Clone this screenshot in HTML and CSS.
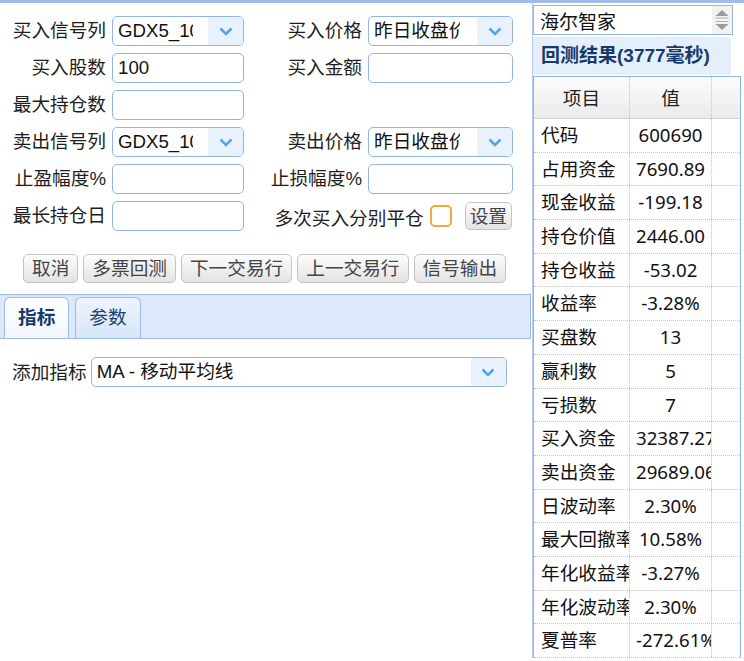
FILE: index.html
```html
<!DOCTYPE html>
<html>
<head>
    <title>回测</title>
    <meta charset="UTF-8">
    <link rel="stylesheet" href="styles.css">
</head>
<body>
    <div class="page">
        <div class="left">
            <div class="form">
                <div class="label">买入信号列</div>
                <div class="select"><div class="value">GDX5_10日金叉</div><div class="arrow"><svg width="14" height="9" viewBox="0 0 14 9"><polyline points="1.5,1.5 7,7 12.5,1.5" fill="none" stroke="#5aa2e6" stroke-width="2.6"/></svg></div></div>
                <div class="label">买入价格</div>
                <div class="select"><div class="value wide">昨日收盘价</div><div class="arrow"><svg width="14" height="9" viewBox="0 0 14 9"><polyline points="1.5,1.5 7,7 12.5,1.5" fill="none" stroke="#5aa2e6" stroke-width="2.6"/></svg></div></div>

                <div class="label">买入股数</div>
                <div class="input">100</div>
                <div class="label">买入金额</div>
                <div class="input"></div>

                <div class="label">最大持仓数</div>
                <div class="input"></div>
                <div></div>
                <div></div>

                <div class="label">卖出信号列</div>
                <div class="select"><div class="value">GDX5_10日死叉</div><div class="arrow"><svg width="14" height="9" viewBox="0 0 14 9"><polyline points="1.5,1.5 7,7 12.5,1.5" fill="none" stroke="#5aa2e6" stroke-width="2.6"/></svg></div></div>
                <div class="label">卖出价格</div>
                <div class="select"><div class="value wide">昨日收盘价</div><div class="arrow"><svg width="14" height="9" viewBox="0 0 14 9"><polyline points="1.5,1.5 7,7 12.5,1.5" fill="none" stroke="#5aa2e6" stroke-width="2.6"/></svg></div></div>

                <div class="label">止盈幅度%</div>
                <div class="input"></div>
                <div class="label">止损幅度%</div>
                <div class="input"></div>

                <div class="label">最长持仓日</div>
                <div class="input"></div>
                <div class="option">
                    <span>多次买入分别平仓</span>
                    <span class="checkbox"></span>
                    <button class="btn small">设置</button>
                </div>
            </div>

            <div class="actions">
                <button class="btn">取消</button>
                <button class="btn">多票回测</button>
                <button class="btn">下一交易行</button>
                <button class="btn">上一交易行</button>
                <button class="btn">信号输出</button>
            </div>

            <div class="tabs">
                <div class="tab active">指标</div>
                <div class="tab">参数</div>
            </div>
            <div class="tab-body">
                <div class="tab-label">添加指标</div>
                <div class="select indicator"><div class="value">MA - 移动平均线</div><div class="arrow"><svg width="14" height="9" viewBox="0 0 14 9"><polyline points="1.5,1.5 7,7 12.5,1.5" fill="none" stroke="#5aa2e6" stroke-width="2.6"/></svg></div></div>
            </div>
        </div>

        <div class="right">
            <div class="stock">
                <div class="stock-name">海尔智家</div>
                <div class="spinner">
                    <svg width="14" height="21" viewBox="0 0 14 21">
                        <polygon points="0.5,6 7,0 13.5,6" fill="#9c9c9c"/>
                        <rect x="0.5" y="7.5" width="13" height="1" fill="#b0b0b0"/>
                        <rect x="0.5" y="11" width="13" height="1" fill="#b0b0b0"/>
                        <polygon points="0.5,14 7,20 13.5,14" fill="#9c9c9c"/>
                    </svg>
                </div>
            </div>
            <div class="result-title">回测结果(3777毫秒)</div>
            <div class="grid">
                <div class="grid-head">
                    <div class="cell c1">项目</div>
                    <div class="cell c2">值</div>
                    <div class="cell c3"></div>
                </div>
                <div class="grid-row"><div class="cell c1">代码</div><div class="cell c2">600690</div><div class="cell c3"></div></div>
                <div class="grid-row"><div class="cell c1">占用资金</div><div class="cell c2">7690.89</div><div class="cell c3"></div></div>
                <div class="grid-row"><div class="cell c1">现金收益</div><div class="cell c2">-199.18</div><div class="cell c3"></div></div>
                <div class="grid-row"><div class="cell c1">持仓价值</div><div class="cell c2">2446.00</div><div class="cell c3"></div></div>
                <div class="grid-row"><div class="cell c1">持仓收益</div><div class="cell c2">-53.02</div><div class="cell c3"></div></div>
                <div class="grid-row"><div class="cell c1">收益率</div><div class="cell c2">-3.28%</div><div class="cell c3"></div></div>
                <div class="grid-row"><div class="cell c1">买盘数</div><div class="cell c2">13</div><div class="cell c3"></div></div>
                <div class="grid-row"><div class="cell c1">赢利数</div><div class="cell c2">5</div><div class="cell c3"></div></div>
                <div class="grid-row"><div class="cell c1">亏损数</div><div class="cell c2">7</div><div class="cell c3"></div></div>
                <div class="grid-row"><div class="cell c1">买入资金</div><div class="cell c2">32387.27</div><div class="cell c3"></div></div>
                <div class="grid-row"><div class="cell c1">卖出资金</div><div class="cell c2">29689.06</div><div class="cell c3"></div></div>
                <div class="grid-row"><div class="cell c1">日波动率</div><div class="cell c2">2.30%</div><div class="cell c3"></div></div>
                <div class="grid-row"><div class="cell c1">最大回撤率</div><div class="cell c2">10.58%</div><div class="cell c3"></div></div>
                <div class="grid-row"><div class="cell c1">年化收益率</div><div class="cell c2">-3.27%</div><div class="cell c3"></div></div>
                <div class="grid-row"><div class="cell c1">年化波动率</div><div class="cell c2">2.30%</div><div class="cell c3"></div></div>
                <div class="grid-row"><div class="cell c1">夏普率</div><div class="cell c2">-272.61%</div><div class="cell c3"></div></div>
            </div>
        </div>
    </div>
</body>
</html>
```

FILE: styles.css
```css
* {
    box-sizing: border-box;
}
body {
    margin: 0;
    font-family: "Liberation Sans", "Noto Sans CJK SC", sans-serif;
    font-size: 18.67px;
    color: #1e1e1e;
    background: #fff;
}
.page {
    display: flex;
    border-top: 3px solid #a0bde9;
    height: 658px;
    overflow: hidden;
}
.left {
    width: 531px;
    flex: none;
}
.form {
    display: grid;
    grid-template-columns: 112px 132px 124px 145px;
    grid-auto-rows: 30px;
    row-gap: 7px;
    padding-top: 13px;
}
.label {
    text-align: right;
    padding-right: 6px;
    line-height: 30px;
    white-space: nowrap;
}
.input {
    height: 30px;
    border: 1px solid #93b5e6;
    border-radius: 5px;
    background: #fff;
    padding: 0 5px;
    line-height: 28px;
    color: #111;
}
.select {
    display: flex;
    height: 30px;
    border: 1px solid #93b5e6;
    border-radius: 5px;
    overflow: hidden;
    background: #fff;
    color: #111;
}
.select .value {
    flex: 1;
    padding-left: 5px;
    margin-right: 15px;
    overflow: hidden;
    white-space: nowrap;
    line-height: 28px;
}
.select .value.wide {
    margin-right: 17px;
}
.select .arrow {
    width: 35px;
    flex: none;
    background: #e8f2fd;
    display: flex;
    align-items: center;
    justify-content: center;
}
.option {
    grid-column: 3 / 5;
    display: flex;
    align-items: center;
    justify-content: flex-end;
    padding-right: 1px;
    white-space: nowrap;
}
.checkbox {
    width: 22px;
    height: 22px;
    margin-left: 6px;
    margin-right: 13px;
    border: 2px solid #f6a83e;
    border-radius: 5px;
    background: #fff;
}
.btn {
    height: 29px;
    padding: 0 8px;
    border: 1px solid #c4c4c4;
    border-radius: 5px;
    background: linear-gradient(#fdfdfd, #e3e3e3);
    color: #444;
    font: inherit;
    line-height: 27px;
}
.btn.small {
    height: 28px;
    padding: 0 4px;
}
.actions {
    display: flex;
    gap: 5px;
    padding-left: 23px;
    margin-top: 23px;
}
.tabs {
    display: flex;
    align-items: flex-end;
    gap: 6px;
    height: 45px;
    margin-top: 11px;
    padding-left: 4px;
    background: #dde9fb;
    border-top: 1px solid #9dbbe8;
    border-bottom: 1px solid #9dbbe8;
    border-right: 1px solid #9dbbe8;
}
.tab {
    height: 41px;
    padding: 0 13px;
    line-height: 39px;
    color: #1f3f73;
    border: 1px solid #9dbbe8;
    border-bottom: none;
    border-radius: 6px 6px 0 0;
    background: linear-gradient(#eef4fd, #d6e5fa);
}
.tab.active {
    font-weight: bold;
    color: #17386b;
    background: linear-gradient(#ffffff, #f1f6fe);
}
.tab-body {
    display: flex;
    align-items: center;
    padding: 18px 0 0 12px;
}
.tab-label {
    margin-right: 4px;
    margin-top: -4px;
}
.select.indicator {
    width: 416px;
}
.right {
    flex: 1;
    margin-left: 1px;
    border-left: 1px solid #b6cbeb;
    padding-top: 2px;
}
.stock {
    display: flex;
    width: 200px;
    height: 30px;
    border: 1px solid #93b5e6;
    background: #fff;
}
.stock-name {
    flex: 1;
    padding: 6px 0 0 6px;
    line-height: 22px;
    font-size: 19px;
    color: #111;
}
.spinner {
    width: 20px;
    background: #f3f3f3;
    display: flex;
    align-items: center;
    justify-content: center;
}
.result-title {
    width: 198px;
    height: 38px;
    margin-top: 2px;
    padding-left: 8px;
    line-height: 38px;
    background: #e5effc;
    color: #173a6c;
    font-size: 19px;
    font-weight: bold;
    white-space: nowrap;
}
.grid {
    width: 208px;
    margin-top: 1px;
    border: 1px solid #93b5e6;
    border-bottom: none;
    font-family: "Noto Sans", "Noto Sans CJK SC", sans-serif;
    color: #111;
}
.grid-head {
    display: flex;
    height: 42px;
    border-bottom: 1px solid #d2d2d2;
    background: linear-gradient(#fcfcfc, #ebebeb);
}
.grid-head .cell {
    line-height: 41px;
    text-align: center;
    color: #222;
}
.grid-row {
    display: flex;
    height: 33.7px;
    border-bottom: 1px dotted #c4c4c4;
}
.cell {
    flex: none;
    overflow: hidden;
    white-space: nowrap;
    line-height: 32.7px;
    border-right: 1px dotted #c4c4c4;
}
.c1 {
    width: 96px;
    padding-left: 7px;
}
.c2 {
    width: 82px;
    padding: 0 6px;
    text-align: center;
}
.c3 {
    flex: 1;
    border-right: none;
}
.grid-head .c1 {
    padding-left: 0;
}
```
